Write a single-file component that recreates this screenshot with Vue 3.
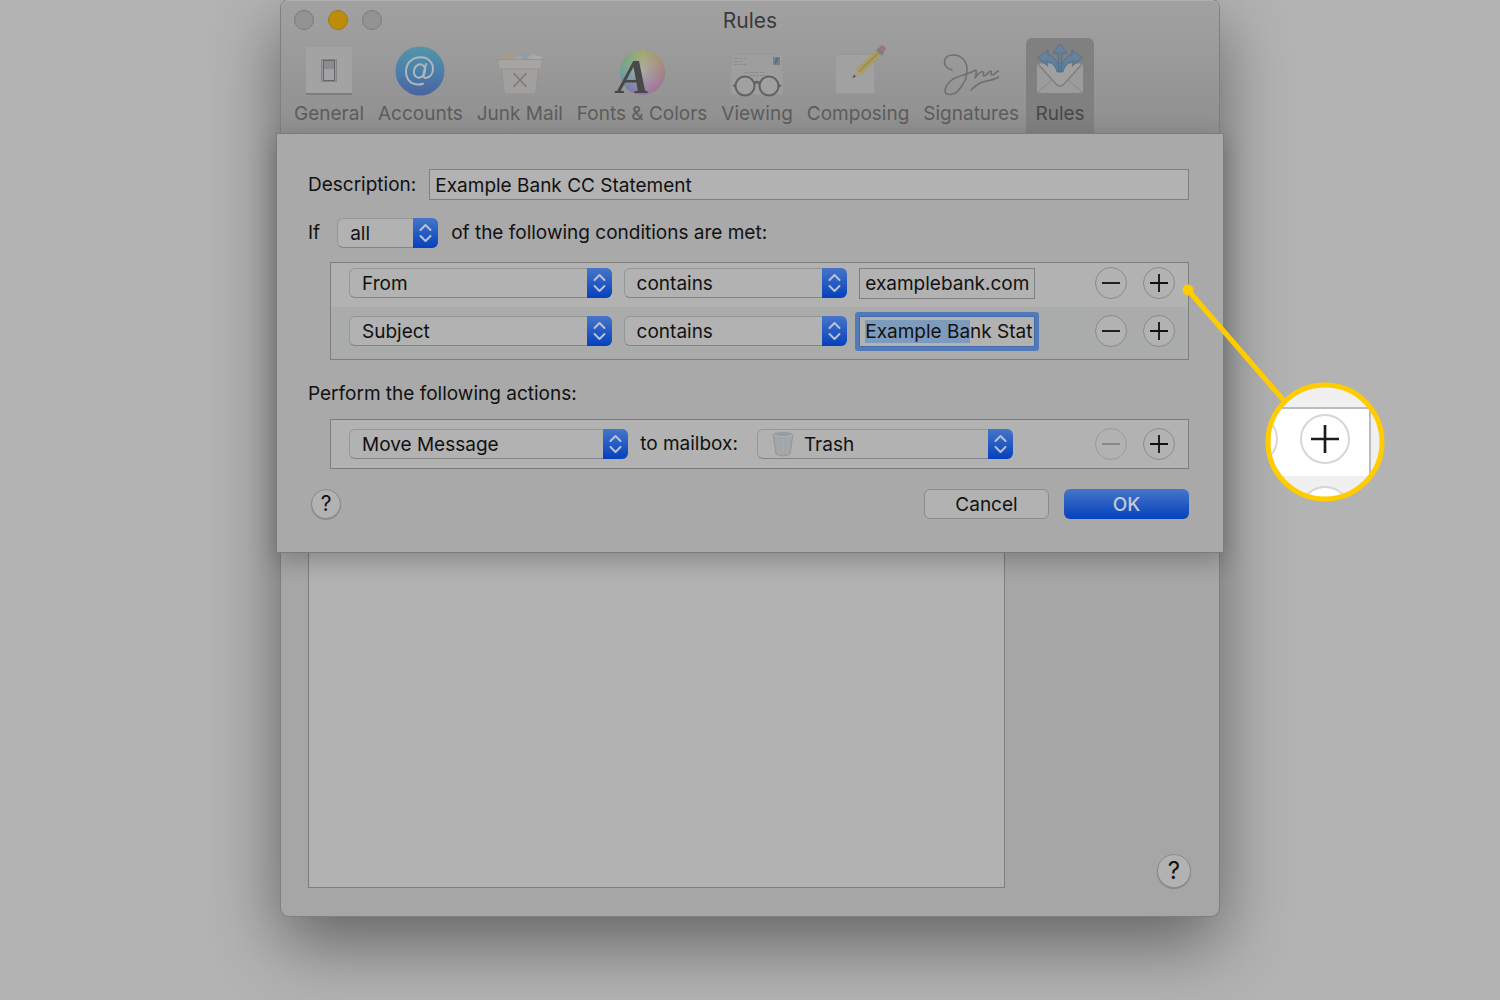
<script setup>
import { onMounted, ref } from 'vue'

const tabs = ['General', 'Accounts', 'Junk Mail', 'Fonts & Colors', 'Viewing', 'Composing', 'Signatures', 'Rules']
const activeTab = ref('Rules')

const description = ref('Example Bank CC Statement')
const match = ref('all')
const conditions = ref([
  { field: 'From', test: 'contains', value: 'examplebank.com' },
  { field: 'Subject', test: 'contains', value: 'Example Bank Stat' }
])
const action = ref('Move Message')
const mailbox = ref('Trash')
const valueInputs = ref([])

function addCondition(index) {
  conditions.value.splice(index + 1, 0, { field: 'From', test: 'contains', value: '' })
}
function removeCondition(index) {
  if (conditions.value.length > 1) conditions.value.splice(index, 1)
}

onMounted(() => {
  const input = valueInputs.value[1]
  input.focus()
  input.setSelectionRange(0, 10)
})
</script>

<template>
  <div class="desktop">
    <main class="window">
      <header class="titlebar">
        <div class="lights">
          <button class="light" aria-label="Close"></button>
          <button class="light minimize" aria-label="Minimize"></button>
          <button class="light" aria-label="Zoom"></button>
        </div>
        <h1>Rules</h1>
      </header>

      <nav class="toolbar">
        <button
          v-for="tab in tabs"
          :key="tab"
          class="tab"
          :class="{ active: tab === activeTab }"
          @click="activeTab = tab"
        >
          <span v-if="tab === 'Fonts & Colors'" class="tab-icon fonts-icon" aria-hidden="true">
            <span class="wheel"></span>
            <span class="letter">A</span>
          </span>
          <svg v-else class="tab-icon" viewBox="0 0 56 56" aria-hidden="true">
            <g v-if="tab === 'General'">
              <rect x="5" y="5" width="46" height="47" rx="1" fill="#7d7d7e" />
              <rect x="5" y="4" width="46" height="46" rx="1" fill="#a3a3a4" />
              <rect x="20.5" y="16.5" width="15" height="22" fill="#98989a" stroke="#868688" />
              <rect x="22.5" y="17.5" width="11" height="20" fill="#a3a3a5" stroke="#666668" />
              <rect x="23" y="18" width="10" height="8" fill="#8c8c8e" />
            </g>
            <g v-else-if="tab === 'Accounts'">
              <defs>
                <linearGradient id="accounts-disc" x1="0" y1="0" x2="0" y2="1">
                  <stop offset="0" stop-color="#5495a8" />
                  <stop offset=".5" stop-color="#4b80aa" />
                  <stop offset="1" stop-color="#4963a0" />
                </linearGradient>
              </defs>
              <circle cx="28" cy="28" r="24.5" fill="url(#accounts-disc)" />
              <g fill="none" stroke="#b0b6bb" stroke-width="2" stroke-linecap="round">
                <ellipse cx="27.5" cy="28" rx="5.5" ry="6.8" transform="rotate(20 27.5 28)" />
                <path d="M34 21 31.5 31c-.8 3 1 4.300 3.200 3.800 3.700-.8 6.300-4.600 6.300-9 0-7-5.300-11.500-12.500-11.500C20 14.300 14 20.300 14 28.500 14 36.500 19 41.500 26.500 41.500c1.700 0 3-.2 4.500-.8" />
              </g>
            </g>
            <g v-else-if="tab === 'Junk Mail'">
              <path d="m8 18 1-6 12-1 4 4-1 4z" fill="#a69a8a" />
              <path d="m22 18 4-5 4 1 3-3 7 3v4z" fill="#9ba7af" />
              <path d="m31 11 5 1-1 5-5-1z" fill="#8b9caa" />
              <path d="m36 18 4-7 10 3-1 5z" fill="#a7aaab" />
              <path d="m9 25 3.500 26h31L47 25z" fill="#a1a09e" stroke="#929190" />
              <path d="M5.500 16.500h45L49 26H7z" fill="#a6a5a2" stroke="#949390" />
              <path d="m21.500 30 13 14m0-14-13 14" stroke="#7d7c79" stroke-width="1.800" fill="none" />
            </g>
            <g v-else-if="tab === 'Viewing'">
              <rect x="2" y="11.5" width="52" height="40" fill="#9e9e9e" stroke="#979797" />
              <rect x="44" y="14" width="7" height="8" fill="#6f8290" />
              <path d="M46 20c2-1 1-4 3-5" stroke="#4c6a80" stroke-width="1.500" fill="none" />
              <path d="M5 15.500h12M5 18.500h8M5 21.500h12M15 29.500h21M21 32.500h18" stroke="#8c8c8c" stroke-width="1" stroke-dasharray="5 1 3 1" />
              <g fill="#a4a4a4" fill-opacity=".6" stroke="#626262" stroke-width="2">
                <circle cx="16" cy="43" r="9.5" />
                <circle cx="40" cy="43" r="9.5" />
                <path d="M25.500 41.500c0-3.500 5-3.500 5 0M6.500 42 4.500 43.500M49.500 42l2 1.500" fill="none" stroke-width="2.500" />
              </g>
            </g>
            <g v-else-if="tab === 'Composing'">
              <rect x="5.5" y="11.5" width="39" height="39" fill="#a1a1a1" stroke="#989898" />
              <path d="m22.500 35 4-9 22-21 5 5-22 21z" fill="#ab9b5f" />
              <path d="m29 28.500 21-20.300" stroke="#8c7d4d" stroke-width="1" />
              <path d="m22.500 35 4-9 5 5z" fill="#ab9c85" />
              <path d="m22.500 35 1.500-3.500 2 2z" fill="#4e4e4e" />
              <path d="m46 7.500 3-3 5.500 5-3 3z" fill="#7d7e84" />
              <path d="m49 4.500 2-2q3-1 5 3l-.5 1.500-2.500 2.500z" fill="#9d777a" />
            </g>
            <g v-else-if="tab === 'Signatures'">
              <path
                d="M9 27C4 26 1 22 1.500 18 2 14 6 12 10.500 12 18 12 24 18 24 26c0 7-1 11-4 15-3 5-7 10-11 10.300-4 .7-7-.8-7-3C2 43 6 39 10 36c5-3 9-3 13-5 4-1 8-3 10-4 1 2 0 5-1 8 3-4 6-7 8-6 2 1-1 4 1 4 3 0 4-5 7-5 1 1-1 4 1 4 3 0 4-4 7-4 3 2 1 5-2 7-6 3-13 3-17 5-4 2-6 4-9 7"
                fill="none" stroke="#6e6e6e" stroke-width="1.500" stroke-linecap="round" stroke-linejoin="round"
              />
            </g>
            <g v-else>
              <defs>
                <linearGradient id="rules-arrows" x1="0" y1="0" x2="0" y2="1">
                  <stop offset="0" stop-color="#6d849c" />
                  <stop offset="1" stop-color="#557d9e" />
                </linearGradient>
              </defs>
              <rect x="5" y="20" width="46" height="30" fill="#9c9c9c" />
              <path d="m5 50 17-15m29 15L34 35" stroke="#848484" fill="none" />
              <path d="m5 20 19 21q4 4 8 0l19-21z" fill="#a0a0a0" stroke="#7c7c7c" stroke-width="1.200" />
              <g fill="url(#rules-arrows)" stroke="#4f6b84" stroke-width=".8" stroke-linejoin="round">
                <path d="M25 29c-1-5-5-10-11-11l2 5L5.500 15 16 7v4.500c7 1.500 11 9 11 17.500z" />
                <path d="M31 29c1-5 5-10 11-11l-2 5 10.500-8L40 7v4.500C33 13 29 20.500 29 29z" />
                <path d="M27 29 26 10h-5l7-9 7 9h-5l-1 19z" />
              </g>
            </g>
          </svg>
          <span>{{ tab }}</span>
        </button>
      </nav>

      <form class="sheet" @submit.prevent>
        <div class="line description">
          <label for="description">Description:</label>
          <input id="description" v-model="description" class="field" type="text" />
        </div>

        <div class="line">
          <label for="match">If</label>
          <span class="popup match">
            <select id="match" v-model="match">
              <option>all</option>
              <option>any</option>
            </select>
            <svg class="cap" viewBox="0 0 24 30" aria-hidden="true"><path d="m7 12 5-5 5 5M7 18l5 5 5-5" /></svg>
          </span>
          <span>of the following conditions are met:</span>
        </div>

        <div class="box">
          <div class="conditions">
            <div v-for="(condition, index) in conditions" :key="index" class="row">
              <span class="popup criterion">
                <select v-model="condition.field" aria-label="Message field">
                  <option>From</option>
                  <option>Subject</option>
                  <option>To</option>
                </select>
                <svg class="cap" viewBox="0 0 24 30" aria-hidden="true"><path d="m7 12 5-5 5 5M7 18l5 5 5-5" /></svg>
              </span>
              <span class="popup test">
                <select v-model="condition.test" aria-label="Comparison">
                  <option>contains</option>
                  <option>does not contain</option>
                  <option>begins with</option>
                </select>
                <svg class="cap" viewBox="0 0 24 30" aria-hidden="true"><path d="m7 12 5-5 5 5M7 18l5 5 5-5" /></svg>
              </span>
              <input ref="valueInputs" v-model="condition.value" class="field value" type="text" aria-label="Value" />
              <span class="round-buttons">
                <button type="button" class="round" aria-label="Remove condition" @click="removeCondition(index)">
                  <svg viewBox="0 0 30 30"><path d="M6 15h18" /></svg>
                </button>
                <button type="button" class="round" aria-label="Add condition" @click="addCondition(index)">
                  <svg viewBox="0 0 30 30"><path d="M6 15h18M15 6v18" /></svg>
                </button>
              </span>
            </div>
          </div>
        </div>

        <p class="perform">Perform the following actions:</p>

        <div class="box actions">
          <div class="row single">
            <span class="popup action">
              <select v-model="action" aria-label="Action">
                <option>Move Message</option>
                <option>Copy Message</option>
                <option>Delete Message</option>
              </select>
              <svg class="cap" viewBox="0 0 24 30" aria-hidden="true"><path d="m7 12 5-5 5 5M7 18l5 5 5-5" /></svg>
            </span>
            <label class="to-mailbox" for="mailbox">to mailbox:</label>
            <span class="popup mailbox">
              <select id="mailbox" v-model="mailbox">
                <option>Trash</option>
                <option>Archive</option>
                <option>Inbox</option>
              </select>
              <svg class="trash" viewBox="0 0 24 28" aria-hidden="true">
                <path d="m2 4 3 20q7 4 14 0l3-20z" fill="#a3a6a9" stroke="#92969a" />
                <path d="m7 8 1 15M12 9v15M17 8l-1 15" stroke="#abaeb1" fill="none" />
                <ellipse cx="12" cy="4" rx="10" ry="2.5" fill="#999c9f" stroke="#b0b3b5" />
              </svg>
              <svg class="cap" viewBox="0 0 24 30" aria-hidden="true"><path d="m7 12 5-5 5 5M7 18l5 5 5-5" /></svg>
            </span>
            <span class="round-buttons">
              <button type="button" class="round" aria-label="Remove action" disabled>
                <svg viewBox="0 0 30 30"><path d="M6 15h18" /></svg>
              </button>
              <button type="button" class="round" aria-label="Add action">
                <svg viewBox="0 0 30 30"><path d="M6 15h18M15 6v18" /></svg>
              </button>
            </span>
          </div>
        </div>

        <footer class="buttons">
          <button type="button" class="help">?</button>
          <button type="button" class="push">Cancel</button>
          <button type="submit" class="push primary">OK</button>
        </footer>
      </form>

      <section class="content">
        <div class="rule-list"></div>
        <button type="button" class="help large">?</button>
      </section>

      <svg class="callout" viewBox="0 0 206 226" aria-hidden="true">
        <defs>
          <clipPath id="lens"><circle cx="145" cy="162" r="57" /></clipPath>
        </defs>
        <path d="m8 10 98 113" stroke="#fc0" stroke-width="5" />
        <circle cx="8" cy="10" r="5.5" fill="#fc0" />
        <g clip-path="url(#lens)">
          <path d="M85 100h120v120H85z" fill="#f0f0f0" />
          <path d="M85 129h105v67H85z" fill="#fff" />
          <path d="M85 128h105M190 127v93" stroke="#bcbcbc" stroke-width="2" fill="none" />
          <g fill="#fff" stroke="#d6d6d6" stroke-width="2">
            <circle cx="145" cy="159" r="24" />
            <circle cx="73" cy="159" r="24" />
            <circle cx="145" cy="231" r="24" />
          </g>
          <path d="M131 159h28M145 145v28M145 217v14" stroke="#1c1c1c" stroke-width="2.700" />
        </g>
        <circle cx="145" cy="162" r="57" fill="none" stroke="#fc0" stroke-width="5" />
      </svg>
    </main>
  </div>
</template>

<style>
body {
  background: #b3b3b3;
}
</style>

<style scoped>
* {
  box-sizing: border-box;
}

.desktop {
  display: flex;
  justify-content: center;
  min-height: 100vh;
  padding-bottom: 84px;
  overflow: hidden;
  background: #b3b3b3;
  color: #111;
  font-family: Inter, "Noto Sans", sans-serif;
  font-size: 19px;
  line-height: 24px;
}

button,
input,
select {
  margin: 0;
  padding: 0;
  border: 0;
  color: inherit;
  font: inherit;
}

.window {
  position: relative;
  display: flex;
  flex-direction: column;
  width: calc(100% - 562px);
  min-width: 900px;
  border-radius: 8px;
  background: #a6a6a6;
  box-shadow: 0 0 0 1px #7f7f7f, 0 26px 70px rgba(0, 0, 0, 0.46);
}

.titlebar {
  position: relative;
  display: flex;
  align-items: center;
  justify-content: center;
  height: 38px;
  border-top: 1px solid #b0b0b0;
  border-radius: 8px 8px 0 0;
  background: linear-gradient(#a1a1a1, #9d9d9d);
}

h1 {
  margin: 0;
  padding-top: 2px;
  color: #3a3a3a;
  font-size: 21px;
  font-weight: 400;
}

.lights {
  position: absolute;
  left: 13px;
  display: flex;
  gap: 14px;
}

.light {
  width: 20px;
  height: 20px;
  border: 1px solid #7b7b7b;
  border-radius: 50%;
  background: #939393;
}

.minimize {
  border-color: #a07a0c;
  background: #bd8c0b;
}

.toolbar {
  display: flex;
  height: 95px;
  padding: 0 6px;
  background: linear-gradient(#9d9d9d, #8f8f8f);
}

.tab {
  display: flex;
  flex-direction: column;
  align-items: center;
  gap: 3px;
  min-width: 68px;
  padding: 5px 7px 0;
  background: none;
  color: #5c5c5c;
  white-space: nowrap;
}

.tab.active {
  border-radius: 6px 6px 0 0;
  background: #808080;
  color: #474747;
}

.tab-icon {
  width: 56px;
  height: 56px;
  margin: 0 -2px;
}

.fonts-icon {
  position: relative;
}

.wheel {
  position: absolute;
  top: 7px;
  left: 6px;
  width: 45px;
  height: 45px;
  border-radius: 50%;
  background:
    radial-gradient(circle, rgba(172, 172, 172, 0.9), rgba(165, 165, 165, 0.1) 70%),
    conic-gradient(#a3a968, #aa9270, #a27a7a, #a0709a, #8f72a5, #7078a6, #64a098, #78a674, #a3a968);
}

.letter {
  position: absolute;
  top: 9px;
  left: 3px;
  color: #484848;
  font: italic 700 49px/50px "Liberation Serif", serif;
}

.sheet {
  position: relative;
  margin: 0 -5px;
  padding: 35px 34px 33px 31px;
  border: 1px solid #7c7c7c;
  background: #a9a9a9;
  box-shadow: 0 8px 22px rgba(0, 0, 0, 0.24);
}

.line {
  display: flex;
  align-items: center;
  gap: 13px;
  height: 30px;
}

.description {
  height: 31px;
  margin-bottom: 18px;
}

.field {
  flex: 1;
  min-width: 0;
  height: 31px;
  padding: 1px 0 0 5px;
  border: 1px solid #808080;
  background: #b2b2b2;
  outline: 0;
}

.value {
  flex: 1 1 176px;
}

.value:focus {
  border-color: #4269a8;
  border-radius: 1px;
  box-shadow: 0 0 0 4px #5279b8;
}

.field::selection {
  background: #7d9bbd;
  color: #111;
}

.popup {
  position: relative;
  display: flex;
  height: 30px;
}

.popup select {
  width: 100%;
  padding: 2px 30px 0 12px;
  border: 1px solid #969696;
  border-bottom-color: #858585;
  border-radius: 6px;
  appearance: none;
  background: #b2b2b2;
  outline: 0;
}

.cap {
  position: absolute;
  top: 0;
  right: 0;
  width: 25px;
  height: 30px;
  border-radius: 0 6px 6px 0;
  background: linear-gradient(#4675c9, #0541bd);
  pointer-events: none;
}

.cap path {
  fill: none;
  stroke: #b9c3d3;
  stroke-width: 2;
  stroke-linecap: round;
  stroke-linejoin: round;
}

.match {
  width: 101px;
  margin-left: 4px;
}

.box {
  margin: 14px 0 0 22px;
  border: 1px solid #7e7e7e;
  background: #b2b2b2;
  overflow: hidden;
}

.conditions {
  margin-top: -4px;
  padding-bottom: 4px;
  background: #aaabab;
}

.row {
  display: flex;
  align-items: center;
  gap: 12px;
  height: 48px;
  padding: 0 13px 0 18px;
}

.row:nth-child(odd) {
  background: #b2b2b2;
}

.criterion {
  flex: 1 1 263px;
}

.test {
  flex: 1 1 224px;
}

.action {
  flex: 1 1 279px;
}

.mailbox {
  flex: 1 1 256px;
  margin-left: 7px;
}

.mailbox select {
  padding-left: 46px;
}

.trash {
  position: absolute;
  top: 1px;
  left: 14px;
  width: 24px;
  height: 28px;
  pointer-events: none;
}

.round-buttons {
  display: flex;
  gap: 16px;
  margin-left: auto;
  padding-left: 48px;
}

.single .round-buttons {
  padding-left: 70px;
}

.round {
  width: 32px;
  height: 32px;
  border: 1px solid #8b8b8b;
  border-radius: 50%;
  background: #b2b2b2;
}

.round svg {
  display: block;
  width: 30px;
  height: 30px;
}

.round path {
  fill: none;
  stroke: #111;
  stroke-width: 1.8;
}

.round:disabled {
  border-color: #9b9b9b;
}

.round:disabled path {
  stroke: #848484;
}

.perform {
  margin: 22px 0 0;
}

.actions {
  margin-top: 13px;
}

.buttons {
  display: flex;
  align-items: center;
  gap: 15px;
  margin-top: 20px;
}

.help {
  width: 30px;
  height: 30px;
  margin: 0 auto 0 3px;
  border: 1px solid #8b8b8b;
  border-radius: 50%;
  background: #b2b2b2;
  box-shadow: 0 1px 1px rgba(0, 0, 0, 0.2);
  font-size: 21px;
}

.push {
  width: 125px;
  height: 30px;
  padding-top: 1px;
  border: 1px solid #8b8b8b;
  border-radius: 6px;
  background: #b2b2b2;
}

.primary {
  border: 0;
  background: linear-gradient(#4675c9, #0541bd);
  color: #c3cad6;
  font-weight: 500;
}

.content {
  display: flex;
  flex: 1;
  align-items: flex-end;
  min-height: 300px;
  padding: 0 28px 28px 27px;
}

.rule-list {
  flex: 1;
  align-self: stretch;
  margin-right: 152px;
  border: 1px solid #7e7e7e;
  border-top: 0;
  background: #b2b2b2;
}

.help.large {
  width: 34px;
  height: 34px;
  margin: 0;
  font-size: 24px;
}

.callout {
  position: absolute;
  top: 280px;
  right: -167px;
  width: 206px;
  height: 226px;
  pointer-events: none;
}
</style>
